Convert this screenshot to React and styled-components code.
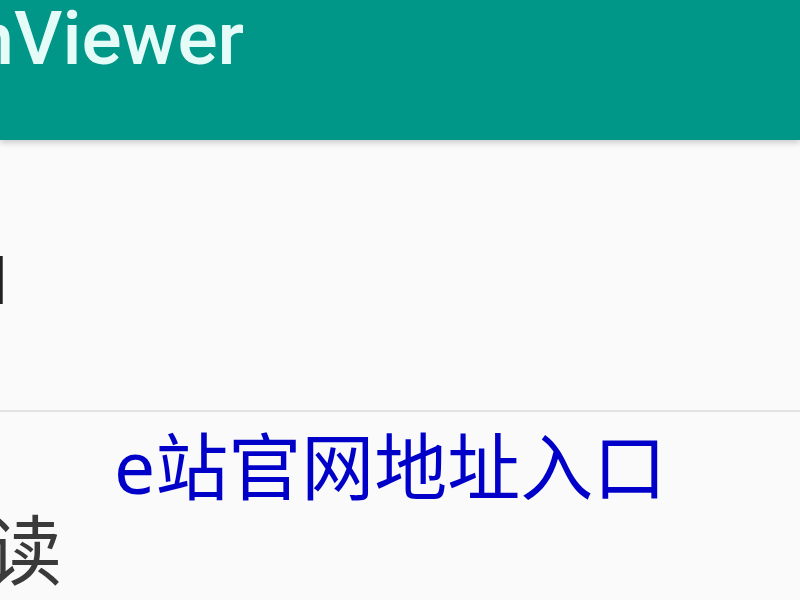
import React from 'react'
import styled, { createGlobalStyle } from 'styled-components'

const GlobalStyle = createGlobalStyle`
  html, body {
    margin: 0;
    padding: 0;
    background: #fafafa;
  }
  body {
    font-family: Roboto, "Noto Sans", "Noto Sans CJK SC", sans-serif;
  }
`

const Screen = styled.div`
  width: 800px;
  height: 600px;
  overflow: hidden;
  background: #fafafa;
  display: flex;
  flex-direction: column;
`

const Toolbar = styled.div`
  height: 140px;
  flex-shrink: 0;
  background: #009688;
  box-shadow: 0 3px 6px rgba(0, 0, 0, 0.18);
  position: relative;
  z-index: 1;
  display: flex;
  align-items: flex-start;
`

const Title = styled.div`
  margin-left: -70px;
  margin-top: -7px;
  font-family: Roboto, sans-serif;
  font-weight: 500;
  font-size: 75px;
  line-height: 90px;
  color: #e4fbf7;
  white-space: nowrap;
`

const Row = styled.div`
  height: 270px;
  flex-shrink: 0;
  display: flex;
  align-items: center;
  border-bottom: 2px solid #e2e2e2;
`

const RowLabel = styled.div`
  margin-left: -41px;
  margin-top: 4px;
  font-family: "Noto Sans", "Noto Sans CJK SC", sans-serif;
  font-size: 68px;
  color: #222;
  white-space: nowrap;
`

const Section = styled.div`
  display: flex;
  flex-direction: column;
`

const Link = styled.div`
  margin-left: 114px;
  margin-top: 9px;
  font-family: "Noto Sans", "Noto Sans CJK SC", sans-serif;
  font-size: 73px;
  line-height: 90px;
  color: #0000c8;
  white-space: nowrap;
`

const Caption = styled.div`
  margin-left: -90px;
  margin-top: -10px;
  font-family: "Noto Sans CJK SC", sans-serif;
  font-size: 76px;
  line-height: 90px;
  color: #3a3a3a;
  white-space: nowrap;
`

export default function App () {
  return (
    <>
      <GlobalStyle />
      <Screen>
        <Toolbar>
          <Title>EhViewer</Title>
        </Toolbar>
        <Row>
          <RowLabel>H</RowLabel>
        </Row>
        <Section>
          <Link>e站官网地址入口</Link>
          <Caption>阅读</Caption>
        </Section>
      </Screen>
    </>
  )
}
